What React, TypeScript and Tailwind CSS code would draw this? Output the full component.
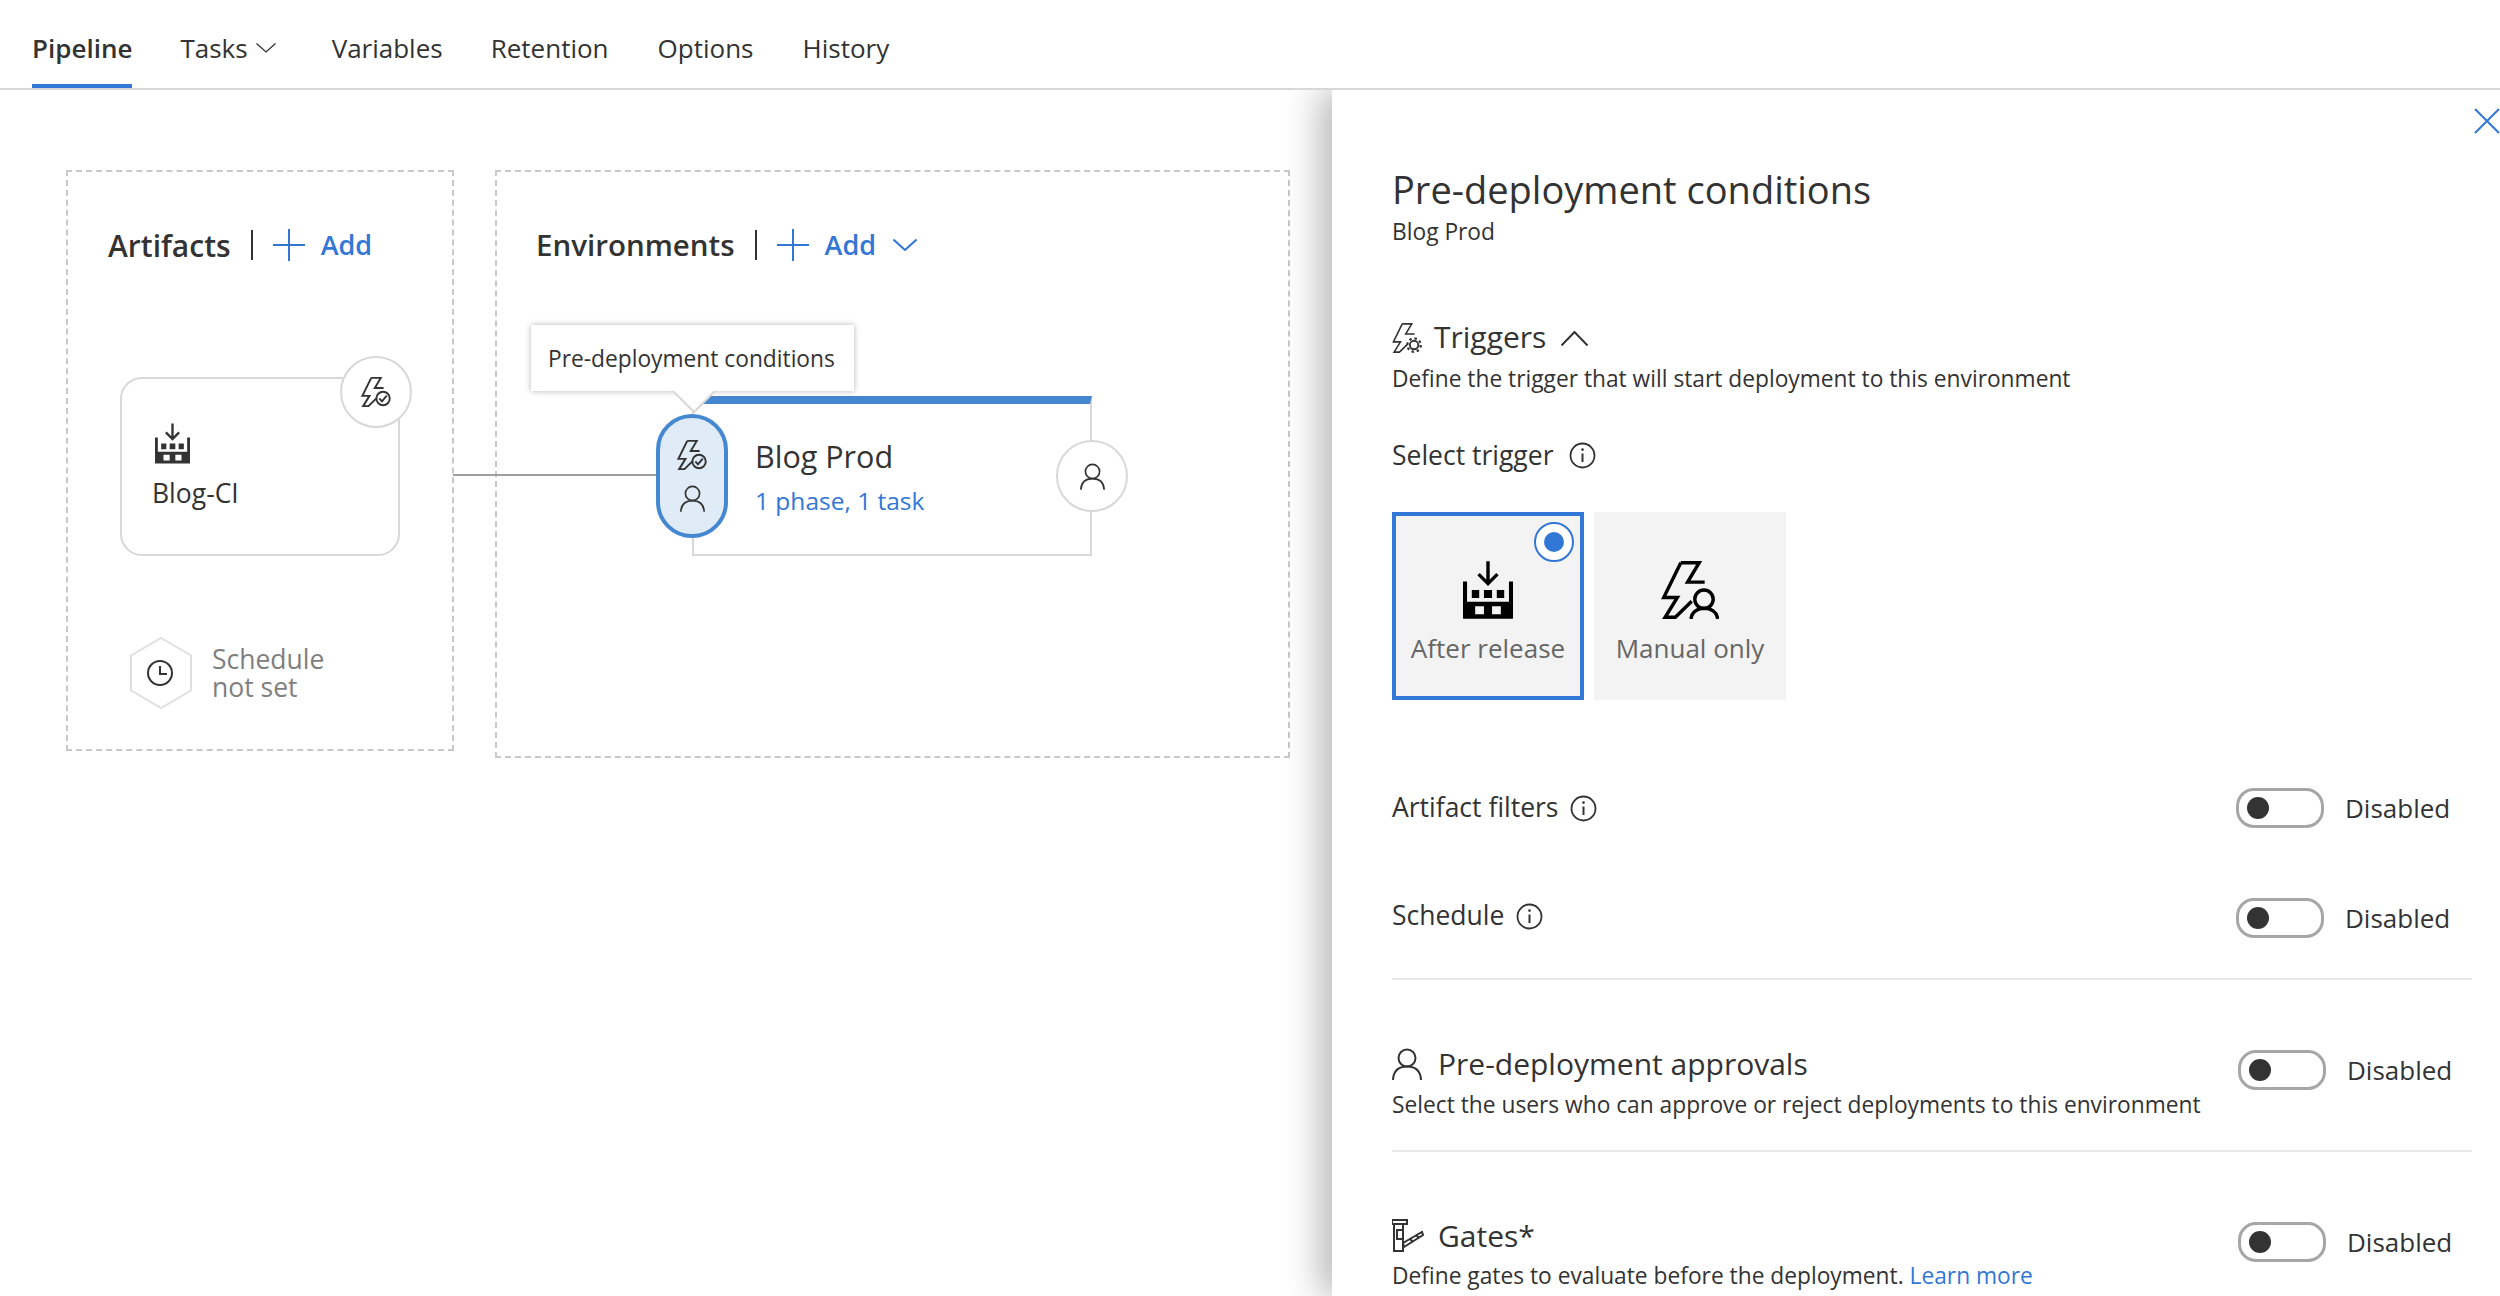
import React from "react";

const BLUE = "#3277d5";

function Bolt({ size, sw = 9, color = "#333", kind }: { size: number; sw?: number; color?: string; kind: "check" | "person" | "gear" }) {
  return (
    <svg width={size} height={size} viewBox="0 0 170 170" fill="none" stroke={color} strokeWidth={sw} className="block shrink-0">
      <path d="M58 5 H112 L78 62 H128 M58 5 L8 107 H48 L12 165 H42 L90 118" strokeLinejoin="miter" />
      {kind === "check" && (
        <>
          <circle cx="125" cy="122" r="38" />
          <path d="M104 122 L119 138 L146 106" />
        </>
      )}
      {kind === "person" && (
        <>
          <circle cx="126" cy="112" r="27" />
          <path d="M88 170 C92 128 162 128 166 170" />
        </>
      )}
      {kind === "gear" && (
        <>
          <circle cx="125" cy="125" r="24" strokeWidth={sw * 1.2} />
          <circle cx="125" cy="125" r="38" strokeWidth={sw * 1.4} strokeDasharray="14 16" />
        </>
      )}
    </svg>
  );
}

function Person({ w, h, sw = 2 }: { w: number; h: number; sw?: number }) {
  return (
    <svg width={w} height={h} viewBox="0 0 30 32" fill="none" stroke="#333" strokeWidth={sw} className="block shrink-0">
      <circle cx="15" cy="10" r="8.5" />
      <path d="M1 32 C1.5 22 7 18.5 15 18.5 C23 18.5 28.5 22 29 32" />
    </svg>
  );
}

function Factory({ w, h, color = "#333" }: { w: number; h: number; color?: string }) {
  return (
    <svg width={w} height={h} viewBox="0 0 148 170" className="block shrink-0">
      <path
        fill={color}
        fillRule="evenodd"
        d="M0 60 H12 V120 H136 V60 H148 V170 H0 Z M36 133 V157 H62 V133 Z M86 133 V157 H112 V133 Z"
      />
      <path fill={color} d="M26 85 H48 V109 H26 Z M62 85 H86 V109 H62 Z M100 85 H122 V109 H100 Z" />
      <path fill="none" stroke={color} strokeWidth="10" d="M74 0 V62 M46 38 L74 66 L102 38" />
    </svg>
  );
}

function Info({ size = 27 }: { size?: number }) {
  return (
    <svg width={size} height={size} viewBox="0 0 27 27" fill="none" stroke="#333" className="block shrink-0">
      <circle cx="13.5" cy="13.5" r="12" strokeWidth="1.8" />
      <path d="M13.5 11.5 V20" strokeWidth="2" />
      <circle cx="13.5" cy="7.6" r="1.3" fill="#333" stroke="none" />
    </svg>
  );
}

function Chevron({ w, h, color = "#333", up = false, sw = 1.6 }: { w: number; h: number; color?: string; up?: boolean; sw?: number }) {
  return (
    <svg width={w} height={h} viewBox={`0 0 ${w} ${h}`} fill="none" stroke={color} strokeWidth={sw} className="block shrink-0">
      <path d={up ? `M0.5 ${h - 0.5} L${w / 2} 1 L${w - 0.5} ${h - 0.5}` : `M0.5 0.5 L${w / 2} ${h - 1} L${w - 0.5} 0.5`} />
    </svg>
  );
}

function Plus() {
  return (
    <svg width="32" height="32" viewBox="0 0 32 32" stroke={BLUE} strokeWidth="2" className="block shrink-0">
      <path d="M16 0 V32 M0 16 H32" />
    </svg>
  );
}

function Toggle() {
  return (
    <div className="flex items-center w-[88px] h-[40px] rounded-[18px] border-[3px] border-[#a6a6a6] bg-white pl-[8px] shrink-0">
      <div className="w-[22px] h-[22px] rounded-full bg-[#333]" />
    </div>
  );
}

function ToggleGroup({ className = "" }: { className?: string }) {
  return (
    <div className={`flex items-center gap-[21px] ml-auto ${className}`}>
      <Toggle />
      <span className="text-[26px] leading-[38px] w-[105px] whitespace-nowrap">Disabled</span>
    </div>
  );
}

function Tab({ label, active, className = "" }: { label: string; active?: boolean; className?: string }) {
  return (
    <div className={`relative h-[88px] flex items-center text-[26px] pt-[8px] whitespace-nowrap ${active ? "font-semibold" : ""} ${className}`}>
      {label}
      {active && <div className="absolute left-0 right-0 bottom-0 h-[4px] bg-[#3277d5]" />}
    </div>
  );
}

function Tile({ label, selected, children }: { label: string; selected?: boolean; children: React.ReactNode }) {
  return (
    <div className={`relative w-[192px] h-[188px] bg-[#f3f3f3] flex flex-col items-center ${selected ? "border-[4px] border-[#3277d5] pt-[45px]" : "pt-[49px]"}`}>
      {children}
      <div className="mt-[11px] text-[26px] leading-[36px] text-[#666] whitespace-nowrap">{label}</div>
      {selected && (
        <div className="absolute right-[6px] top-[6px] w-[40px] h-[40px] rounded-full bg-white border-[2px] border-[#3277d5] flex items-center justify-center">
          <div className="w-[20px] h-[20px] rounded-full bg-[#3277d5]" />
        </div>
      )}
    </div>
  );
}

function CanvasHeader({ title, size, pad, caret }: { title: string; size: string; pad: string; caret?: boolean }) {
  return (
    <div className={`flex items-center h-[40px] mt-[53px] ${pad}`}>
      <span className={`${size} font-semibold whitespace-nowrap`}>{title}</span>
      <div className="w-[2px] h-[30px] bg-[#333] ml-[20px] mr-[20px]" />
      <Plus />
      <span className="text-[27px] font-semibold text-[#3277d5] ml-[16px]">Add</span>
      {caret && <div className="ml-[17px]"><Chevron w={24} h={12} color={BLUE} sw={2} /></div>}
    </div>
  );
}

export default function App() {
  return (
    <div className="h-[1296px] w-[2500px] overflow-hidden bg-white text-[#333] font-['Open_Sans',sans-serif] flex flex-col">
      <div className="relative z-10 flex h-[90px] border-b-[2px] border-[#d8d8d8] bg-white pl-[32px] shrink-0">
        <Tab label="Pipeline" active />
        <Tab label="Tasks" className="ml-[48px]" />
        <div className="h-[88px] flex items-center pt-[8px] ml-[8px]"><Chevron w={20} h={10} sw={1.3} /></div>
        <Tab label="Variables" className="ml-[56px]" />
        <Tab label="Retention" className="ml-[48px]" />
        <Tab label="Options" className="ml-[49px]" />
        <Tab label="History" className="ml-[49px]" />
      </div>

      <div className="flex flex-1 min-h-0">
        <div className="relative w-[1332px] shrink-0 flex items-start pl-[66px] pt-[80px] gap-[41px]">
          <div className="w-[388px] h-[581px] border-[2px] border-dashed border-[#c8c8c8] shrink-0">
            <CanvasHeader title="Artifacts" size="text-[30px]" pad="pl-[40px]" />
          </div>
          <div className="w-[795px] h-[588px] border-[2px] border-dashed border-[#c8c8c8] shrink-0">
            <CanvasHeader title="Environments" size="text-[29.5px]" pad="pl-[39px]" caret />
          </div>

          {/* diagram nodes */}
          <div className="absolute left-[453px] top-[384px] w-[204px] h-[2px] bg-[#a0a0a0]" />

          <div className="absolute left-[120px] top-[287px] w-[280px] h-[179px] rounded-[22px] border-[2px] border-[#d8d8d8] bg-white pl-[33px] pt-[44px]">
            <Factory w={35} h={41} />
            <div className="text-[26.5px] leading-[32px] mt-[13px] -ml-[3px]">Blog-CI</div>
          </div>
          <div className="absolute left-[340px] top-[266px] w-[72px] h-[72px] rounded-full border-[2px] border-[#d8d8d8] bg-white flex items-center justify-center">
            <Bolt size={30} sw={11} kind="check" />
          </div>

          <div className="absolute left-[130px] top-[547px] flex items-center gap-[20px]">
            <div className="relative w-[62px] h-[72px]">
              <svg width="62" height="72" viewBox="0 0 62 72" fill="none" stroke="#dfdfdf" strokeWidth="2" className="block">
                <path d="M31 1 L61 18.5 V53.5 L31 71 L1 53.5 V18.5 Z" />
              </svg>
              <svg width="26" height="26" viewBox="0 0 26 26" fill="none" stroke="#333" strokeWidth="2" className="absolute left-[17px] top-[23px]">
                <circle cx="13" cy="13" r="12" />
                <path d="M13 6 V14 H20" />
              </svg>
            </div>
            <div className="text-[26.5px] leading-[28px] text-[#7f7f7f]">
              Schedule
              <br />
              not set
            </div>
          </div>

          <div className="absolute left-[692px] top-[306px] w-[400px] h-[160px] border-[2px] border-t-[8px] border-[#d8d8d8] border-t-[#4586d0] bg-white pl-[61px] pt-[32px]">
            <div className="text-[30.5px] leading-[40px] whitespace-nowrap">Blog Prod</div>
            <div className="text-[24.5px] leading-[36px] mt-[7px] text-[#3277d5] whitespace-nowrap">1 phase, 1 task</div>
          </div>
          <div className="absolute left-[1056px] top-[350px] w-[72px] h-[72px] rounded-full border-[2px] border-[#d8d8d8] bg-white flex items-center justify-center">
            <Person w={25} h={29} />
          </div>
          <div className="absolute left-[656px] top-[324px] w-[72px] h-[124px] rounded-full border-[4px] border-[#4488d2] bg-[#e0ebf8] flex flex-col items-center pt-[22px] gap-[14px]">
            <Bolt size={30} sw={11} kind="check" />
            <Person w={25} h={29} />
          </div>
          <div className="absolute left-[531px] top-[235px] w-[323px] h-[66px] bg-white shadow-[0_0_6px_rgba(0,0,0,0.3)] flex items-center pl-[17px] pt-[2px] text-[22.75px] whitespace-nowrap">
            Pre-deployment conditions
            <svg width="48" height="24" viewBox="0 0 48 24" className="absolute left-[139px] top-[65px]">
              <path d="M2 0 L24 22 L46 0" fill="white" stroke="#d8d8d8" strokeWidth="2" />
              <path d="M0 -2 H48 V1 H0 Z" fill="white" />
            </svg>
          </div>
        </div>

        <div className="relative z-[5] flex-1 bg-white shadow-[-12px_0_34px_rgba(0,0,0,0.28)] pl-[60px] pr-[28px] pt-[74px]">
          <svg width="26" height="26" viewBox="0 0 26 26" stroke="#3277d5" strokeWidth="2" className="absolute right-0 top-[18px]">
            <path d="M1 1 L25 25 M25 1 L1 25" />
          </svg>

          <div className="text-[38px] leading-[50px] whitespace-nowrap">Pre-deployment conditions</div>
          <div className="text-[22.75px] leading-[28px] mt-[4px]">Blog Prod</div>

          <div className="flex items-center h-[36px] mt-[74px]">
            <Bolt size={30} sw={9} kind="gear" />
            <span className="text-[30px] ml-[12px] whitespace-nowrap -mt-[3px]">Triggers</span>
            <div className="ml-[15px]"><Chevron w={27} h={15} up sw={2} /></div>
          </div>
          <div className="text-[22.75px] leading-[28px] mt-[9px] whitespace-nowrap">Define the trigger that will start deployment to this environment</div>

          <div className="flex items-center h-[32px] mt-[46px] gap-[16px]">
            <span className="text-[26.5px] whitespace-nowrap pt-[2px]">Select trigger</span>
            <Info />
          </div>

          <div className="flex gap-[10px] mt-[41px]">
            <Tile label="After release" selected>
              <Factory w={50} h={58} color="#000" />
            </Tile>
            <Tile label="Manual only">
              <Bolt size={58} sw={10} color="#000" kind="person" />
            </Tile>
          </div>

          <div className="flex items-center h-[40px] mt-[88px]">
            <div className="flex items-center gap-[12px]">
              <span className="text-[26.5px] whitespace-nowrap">Artifact filters</span>
              <Info />
            </div>
            <ToggleGroup className="mr-[22px]" />
          </div>

          <div className="flex items-center h-[40px] mt-[70px]">
            <div className="flex items-center gap-[12px] -mt-[4px]">
              <span className="text-[26.5px] whitespace-nowrap">Schedule</span>
              <Info />
            </div>
            <ToggleGroup className="mr-[22px]" />
          </div>

          <div className="h-[2px] bg-[#e8e8e8] mt-[40px]" />

          <div className="flex items-start mt-[66px]">
            <div>
              <div className="flex items-center h-[36px] gap-[16px]">
                <Person w={30} h={32} />
                <span className="text-[30px] whitespace-nowrap -mt-[2px]">Pre-deployment approvals</span>
              </div>
              <div className="text-[22.75px] leading-[28px] mt-[9px] whitespace-nowrap">Select the users who can approve or reject deployments to this environment</div>
            </div>
            <ToggleGroup className="mr-[20px] mt-[4px]" />
          </div>

          <div className="h-[2px] bg-[#e8e8e8] mt-[31px]" />

          <div className="flex items-start mt-[65px]">
            <div>
              <div className="flex items-center h-[36px] gap-[14px]">
                <svg width="32" height="33" viewBox="0 0 32 33" fill="none" stroke="#333" strokeWidth="2" className="block shrink-0">
                  <path d="M0 1 H15 V5 H0 Z M2 5 V32 H11 V5 M5 11 H11 V20 H5 Z" />
                  <path d="M11 24 L30 13 L31 16 L12 28 Z" strokeWidth="2" />
                  <path d="M18 20 L21 23 M24 16 L27 19" strokeWidth="2" />
                </svg>
                <span className="text-[30px] whitespace-nowrap">Gates*</span>
              </div>
              <div className="text-[22.75px] leading-[28px] mt-[9px] whitespace-nowrap">
                Define gates to evaluate before the deployment. <span className="text-[#3277d5]">Learn more</span>
              </div>
            </div>
            <ToggleGroup className="mr-[20px] mt-[5px]" />
          </div>
        </div>
      </div>
    </div>
  );
}
